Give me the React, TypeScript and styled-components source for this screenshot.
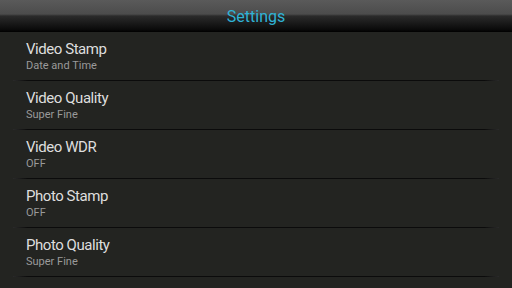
import React from "react";
import styled, { createGlobalStyle } from "styled-components";

const Global = createGlobalStyle`
  html, body { margin: 0; padding: 0; background: #232421; }
  body { font-family: Roboto, "Noto Sans", sans-serif; }
`;

const Screen = styled.div`
  width: 512px;
  height: 288px;
  background: #232421;
  overflow: hidden;
  display: flex;
  flex-direction: column;
`;

const Header = styled.header`
  height: 32px;
  flex: none;
  box-sizing: border-box;
  padding-top: 1px;
  display: flex;
  align-items: center;
  justify-content: center;
  background: linear-gradient(
    to bottom,
    #5a5a5a 0%,
    #4c4c4c 44%,
    #2b2b2b 50%,
    #0a0a0a 92%,
    #000 100%
  );
`;

const Title = styled.h1`
  margin: 0;
  font-family: Roboto, sans-serif;
  font-weight: 400;
  font-size: 16px;
  color: #2fb3d6;
  line-height: 1;
`;

const List = styled.div`
  display: flex;
  flex-direction: column;
`;

const Row = styled.div`
  height: 48px;
  padding: 8px 0 0 26px;
  display: flex;
  flex-direction: column;
  gap: 1px;
  box-sizing: border-box;
`;

const Label = styled.div`
  font-size: 15px;
  letter-spacing: -0.45px;
  color: #dedede;
  line-height: 18px;
`;

const Value = styled.div`
  font-size: 11px;
  color: #9a9a9a;
  line-height: 13px;
`;

const Divider = styled.div`
  height: 1px;
  margin: 0 13px;
  background: linear-gradient(to right, #2a2a2a 0%, #0b0b0b 3%, #0b0b0b 97%, #2a2a2a 100%);
`;

const items = [
  ["Video Stamp", "Date and Time"],
  ["Video Quality", "Super Fine"],
  ["Video WDR", "OFF"],
  ["Photo Stamp", "OFF"],
  ["Photo Quality", "Super Fine"],
];

export default function App() {
  return (
    <Screen>
      <Global />
      <Header>
        <Title>Settings</Title>
      </Header>
      <List>
        {items.map(([l, v]) => (
          <React.Fragment key={l}>
            <Row>
              <Label>{l}</Label>
              <Value>{v}</Value>
            </Row>
            <Divider />
          </React.Fragment>
        ))}
      </List>
    </Screen>
  );
}
